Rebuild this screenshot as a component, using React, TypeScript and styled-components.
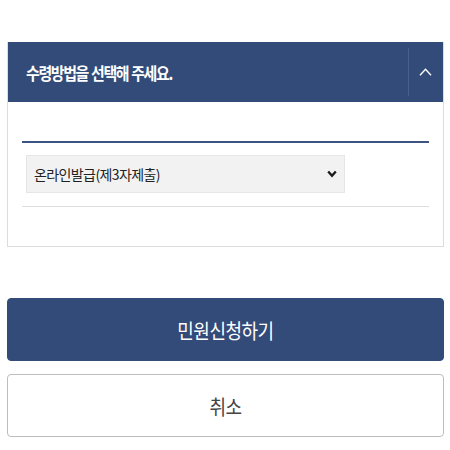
import React from "react";
import styled, { createGlobalStyle } from "styled-components";

const Global = createGlobalStyle`
  html, body { margin: 0; padding: 0; background: #ffffff; }
  body { font-family: "Noto Sans CJK KR", "Noto Sans", sans-serif; }
  * { box-sizing: border-box; }
`;

const Page = styled.div`
  width: 450px;
  padding: 42px 6px 0 7px;
  display: flex;
  flex-direction: column;
`;

const Panel = styled.section`
  border: 1px solid #dcdcdc;
  border-top: none;
  display: flex;
  flex-direction: column;
`;

const Header = styled.div`
  height: 60px;
  background: #334b78;
  display: flex;
  align-items: center;
`;

const Title = styled.h2`
  flex: 1;
  margin: 0;
  padding-left: 18px;
  color: #ffffff;
  font-size: 15px;
  font-weight: 700;
  letter-spacing: -1.4px;
  word-spacing: 1px;
  transform: scaleY(1.1);
`;

const ToggleButton = styled.button`
  width: 35px;
  height: 100%;
  background: transparent;
  border: none;
  padding: 0;
  display: flex;
  align-items: center;
  justify-content: center;
  position: relative;
  cursor: pointer;
  &::before {
    content: "";
    position: absolute;
    left: 0;
    top: 6px;
    bottom: 6px;
    width: 1px;
    background: #46608c;
  }
`;

const Body = styled.div`
  padding: 39px 14px 39px 14px;
  display: flex;
  flex-direction: column;
`;

const Rule = styled.div<{ $strong?: boolean }>`
  height: ${(p) => (p.$strong ? "2px" : "1px")};
  background: ${(p) => (p.$strong ? "#3d5482" : "#dedede")};
`;

const SelectRow = styled.div`
  padding: 12px 0 13px 4px;
`;

const SelectWrap = styled.div`
  position: relative;
  width: 319px;
`;

const Select = styled.select`
  appearance: none;
  -webkit-appearance: none;
  width: 100%;
  height: 38px;
  background: #f2f2f2;
  border: 1px solid #e6e6e6;
  border-radius: 0;
  padding: 0 0 0 7px;
  font-family: "Noto Sans CJK KR", sans-serif;
  font-size: 14px;
  letter-spacing: -0.6px;
  color: #222;
  outline: none;
`;

const Caret = styled.svg`
  position: absolute;
  right: 8px;
  top: 15px;
  pointer-events: none;
`;

const Actions = styled.div`
  margin-top: 51px;
  display: flex;
  flex-direction: column;
  gap: 13px;
`;

const ActionButton = styled.button<{ $primary?: boolean }>`
  height: 63px;
  border-radius: 4px;
  font-family: "Noto Sans CJK KR", sans-serif;
  font-size: 18px;
  letter-spacing: -0.5px;
  cursor: pointer;
  background: ${(p) => (p.$primary ? "#334b78" : "#ffffff")};
  color: ${(p) => (p.$primary ? "#ffffff" : "#444444")};
  border: 1px solid ${(p) => (p.$primary ? "#334b78" : "#bdbdbd")};
  span { display: inline-block; transform: scaleY(1.15); }
`;

export default function App() {
  return (
    <>
      <Global />
      <Page>
        <Panel>
          <Header>
            <Title>수령방법을 선택해 주세요.</Title>
            <ToggleButton aria-label="접기">
              <svg width="13" height="8" viewBox="0 0 13 8">
                <path d="M1 7.2 L6.5 1.2 L12 7.2" fill="none" stroke="#ffffff" strokeWidth="1.4" />
              </svg>
            </ToggleButton>
          </Header>
          <Body>
            <Rule $strong />
            <SelectRow>
              <SelectWrap>
                <Select defaultValue="online3">
                  <option value="online3">온라인발급(제3자제출)</option>
                  <option value="online">온라인발급(본인출력)</option>
                  <option value="visit">방문수령</option>
                </Select>
                <Caret width="10" height="8" viewBox="0 0 10 8">
                  <path d="M1.2 1.5 L5 5.8 L8.8 1.5" fill="none" stroke="#1a1a1a" strokeWidth="2.4" />
                </Caret>
              </SelectWrap>
            </SelectRow>
            <Rule />
          </Body>
        </Panel>
        <Actions>
          <ActionButton $primary><span>민원신청하기</span></ActionButton>
          <ActionButton><span>취소</span></ActionButton>
        </Actions>
      </Page>
    </>
  );
}
